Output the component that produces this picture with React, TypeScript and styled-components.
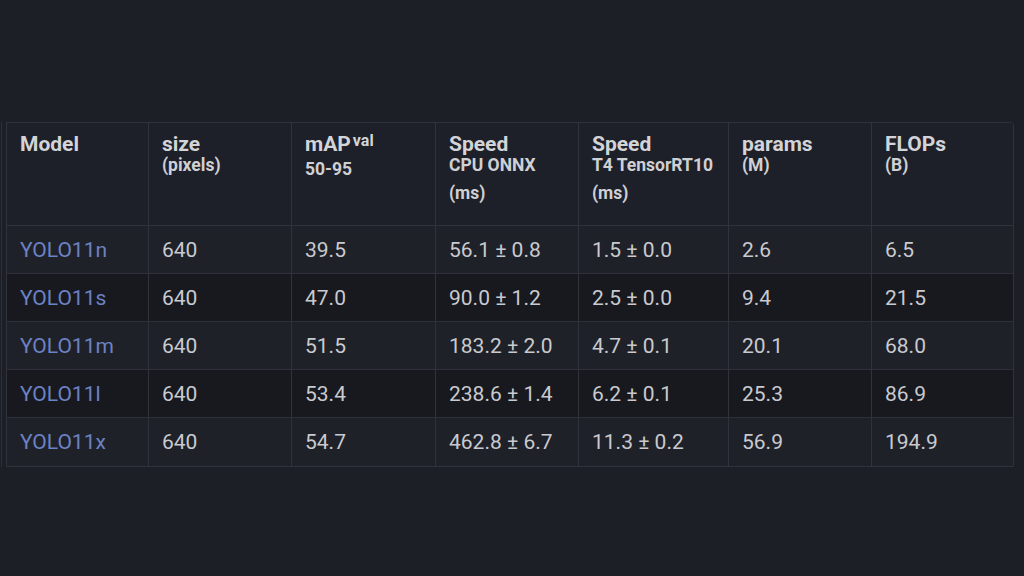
import React from "react";
import styled, { createGlobalStyle } from "styled-components";

const GlobalStyle = createGlobalStyle`
  html, body {
    margin: 0;
    padding: 0;
    background: #1d1f26;
  }
  body {
    width: 1024px;
    height: 576px;
    overflow: hidden;
    font-family: Roboto, "Liberation Sans", sans-serif;
  }
`;

const Page = styled.div`
  padding: 122px 0 0 1px;
  display: flex;
`;

const ScrollWrap = styled.div`
  border-left: 1px solid #2c2f37;
  padding-left: 4px;
`;

const Table = styled.table`
  border-collapse: separate;
  border-spacing: 0;
  width: 1008px;
  table-layout: fixed;
  border: 1px solid #30333b;
  border-radius: 0 4px 0 0;
  overflow: hidden;
  color: #c9cacf;
`;

const HeadCell = styled.th<{ $w: number; $last?: boolean }>`
  width: ${(p) => p.$w}px;
  height: 103px;
  box-sizing: border-box;
  vertical-align: top;
  text-align: left;
  padding: 11px 0 0 13px;
  background: #1e2029;
  border-right: ${(p) => (p.$last ? "none" : "1px solid #30333b")};
  border-bottom: 1px solid #30333b;
  color: #d3d4d8;
  font-weight: 700;
`;

const Main = styled.div`
  font-size: 21px;
  line-height: 21px;
  white-space: nowrap;
`;

const Sup = styled.sup`
  font-size: 16px;
  vertical-align: top;
  position: relative;
  top: -4px;
  margin-left: 2px;
`;

const Sub = styled.div<{ $gap?: number }>`
  font-size: 17.5px;
  line-height: 20px;
  margin-top: ${(p) => p.$gap ?? 0}px;
  white-space: nowrap;
  color: #cfd0d4;
`;

const Row = styled.tr<{ $dark: boolean }>`
  background: ${(p) => (p.$dark ? "#17191f" : "#1f2129")};
`;

const Cell = styled.td<{ $last?: boolean; $bottom?: boolean }>`
  height: 48px;
  box-sizing: border-box;
  padding: 0 0 0 13px;
  font-size: 21px;
  line-height: 24px;
  vertical-align: middle;
  white-space: nowrap;
  border-right: ${(p) => (p.$last ? "none" : "1px solid #30333b")};
  border-bottom: ${(p) => (p.$bottom ? "none" : "1px solid #2e3139")};
  color: #c9cacf;
`;

const ModelLink = styled.a`
  color: #6c82c4;
  text-decoration: none;
`;

const widths = [142, 143, 144, 143, 150, 143, 141];

const rows = [
  ["YOLO11n", "640", "39.5", "56.1 ± 0.8", "1.5 ± 0.0", "2.6", "6.5"],
  ["YOLO11s", "640", "47.0", "90.0 ± 1.2", "2.5 ± 0.0", "9.4", "21.5"],
  ["YOLO11m", "640", "51.5", "183.2 ± 2.0", "4.7 ± 0.1", "20.1", "68.0"],
  ["YOLO11l", "640", "53.4", "238.6 ± 1.4", "6.2 ± 0.1", "25.3", "86.9"],
  ["YOLO11x", "640", "54.7", "462.8 ± 6.7", "11.3 ± 0.2", "56.9", "194.9"],
];

export default function App() {
  return (
    <>
      <GlobalStyle />
      <Page>
        <ScrollWrap>
          <Table>
            <thead>
              <tr>
                <HeadCell $w={widths[0]}>
                  <Main>Model</Main>
                </HeadCell>
                <HeadCell $w={widths[1]}>
                  <Main>size</Main>
                  <Sub>(pixels)</Sub>
                </HeadCell>
                <HeadCell $w={widths[2]}>
                  <Main>
                    mAP<Sup>val</Sup>
                  </Main>
                  <Sub $gap={4}>50-95</Sub>
                </HeadCell>
                <HeadCell $w={widths[3]}>
                  <Main>Speed</Main>
                  <Sub>CPU ONNX</Sub>
                  <Sub $gap={8}>(ms)</Sub>
                </HeadCell>
                <HeadCell $w={widths[4]}>
                  <Main>Speed</Main>
                  <Sub>T4 TensorRT10</Sub>
                  <Sub $gap={8}>(ms)</Sub>
                </HeadCell>
                <HeadCell $w={widths[5]}>
                  <Main>params</Main>
                  <Sub>(M)</Sub>
                </HeadCell>
                <HeadCell $w={widths[6]} $last>
                  <Main>FLOPs</Main>
                  <Sub>(B)</Sub>
                </HeadCell>
              </tr>
            </thead>
            <tbody>
              {rows.map((r, i) => (
                <Row key={r[0]} $dark={i % 2 === 1}>
                  {r.map((v, j) => (
                    <Cell key={j} $last={j === r.length - 1} $bottom={i === rows.length - 1}>
                      {j === 0 ? <ModelLink href="#">{v}</ModelLink> : v}
                    </Cell>
                  ))}
                </Row>
              ))}
            </tbody>
          </Table>
        </ScrollWrap>
      </Page>
    </>
  );
}
